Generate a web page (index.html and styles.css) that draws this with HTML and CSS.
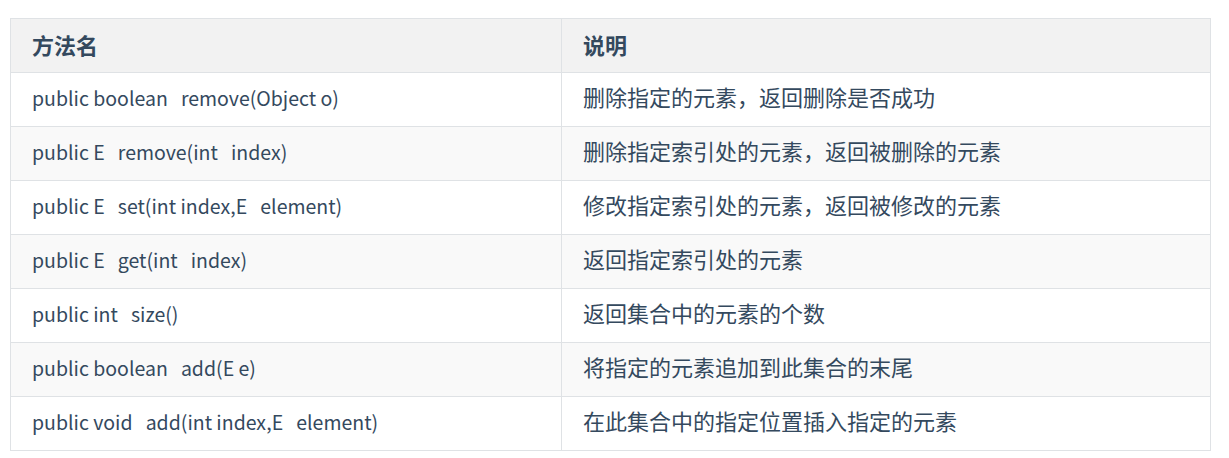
FILE: index.html
```html
<!DOCTYPE html>
<html lang="zh">
<head>
<meta charset="utf-8">
<link rel="stylesheet" href="styles.css">
</head>
<body>
<div class="wrap">
<table class="api">
<thead>
<tr><th class="c1">方法名</th><th>说明</th></tr>
</thead>
<tbody>
<tr><td class="code">public boolean   remove(Object o)</td><td class="desc">删除指定的元素，返回删除是否成功</td></tr>
<tr><td class="code">public E   remove(int   index)</td><td class="desc">删除指定索引处的元素，返回被删除的元素</td></tr>
<tr><td class="code">public E   set(int index,E   element)</td><td class="desc">修改指定索引处的元素，返回被修改的元素</td></tr>
<tr><td class="code">public E   get(int   index)</td><td class="desc">返回指定索引处的元素</td></tr>
<tr><td class="code">public int   size()</td><td class="desc">返回集合中的元素的个数</td></tr>
<tr><td class="code">public boolean   add(E e)</td><td class="desc">将指定的元素追加到此集合的末尾</td></tr>
<tr><td class="code">public void   add(int index,E   element)</td><td class="desc">在此集合中的指定位置插入指定的元素</td></tr>
</tbody>
</table>
</div>
</body>
</html>
```
FILE: styles.css
```css
html, body {
  margin: 0;
  padding: 0;
  background: #ffffff;
}
.wrap {
  padding: 18px 0 0 10px;
}
.api {
  border-collapse: collapse;
  width: 1201px;
  font-family: "Noto Sans CJK SC", "Noto Sans", sans-serif;
  font-size: 22px;
  color: #34495e;
}
.api th,
.api td {
  border: 1px solid #dfe2e5;
  height: 54px;
  padding: 0 0 3px 21px;
  text-align: left;
  vertical-align: middle;
  box-sizing: border-box;
  line-height: 1.2;
}
.api th {
  background: #f2f2f2;
  font-weight: 700;
}
.api .c1 {
  width: 551px;
}
.api td.code {
  white-space: pre;
  font-size: 19.5px;
}
.api td.desc {
  padding-bottom: 6px;
}
.api tbody tr:nth-child(even) td {
  background: #f9f9f9;
}
```
